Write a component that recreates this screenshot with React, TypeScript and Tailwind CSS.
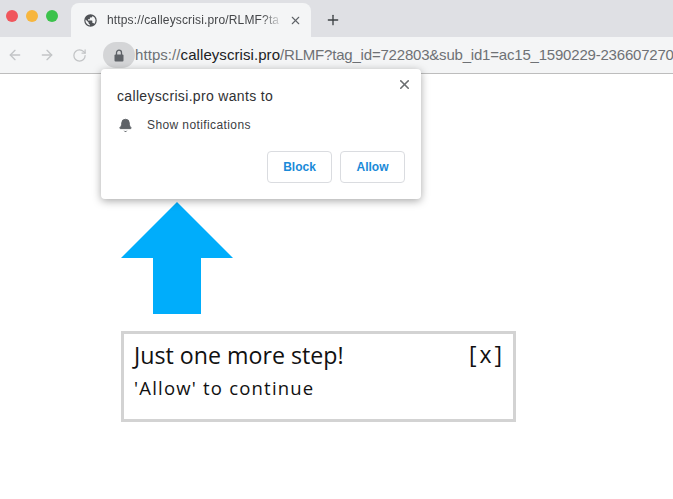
import React from 'react'
import { ArrowLeft, ArrowRight, RotateCw, X, Plus, Bell } from 'lucide-react'

function Globe() {
    return (
        <svg width="15" height="15" viewBox="0 0 24 24" className="shrink-0 fill-[#4f5256]">
            <path d="M12 2a10 10 0 1 0 0 20 10 10 0 0 0 0-20zm-1 17.900A8 8 0 0 1 4.200 10.200L9 15v1c0 1.100.9 2 2 2v1.900zm6.900-2.500A2 2 0 0 0 16 16h-1v-3c0-.6-.4-1-1-1H8v-2h2c.6 0 1-.4 1-1V7h2a2 2 0 0 0 2-2v-.4a8 8 0 0 1 2.900 12.800z" />
        </svg>
    )
}

function LockIcon() {
    return (
        <svg width="10" height="13" viewBox="0 0 10 13" className="block">
            <path d="M2.500 6V3.700a2.500 2.500 0 0 1 5 0V6" fill="none" stroke="#5f6368" strokeWidth="1.300" />
            <rect x="0.500" y="5.500" width="9" height="7" rx="1" fill="#5f6368" />
        </svg>
    )
}

export default function App() {
    return (
        <main className="relative h-[499px] w-[673px] overflow-hidden bg-white font-['Liberation_Sans',sans-serif]">

            {/* tab strip */}
            <div className="flex h-[37px] items-end bg-[#dfe0e4]">
                <div className="flex w-[71px] items-center gap-[8px] self-center pb-[5px] pl-[6px]">
                    <span className="h-[12px] w-[12px] rounded-full bg-[#f0565c]"></span>
                    <span className="h-[12px] w-[12px] rounded-full bg-[#f7b63e]"></span>
                    <span className="h-[12px] w-[12px] rounded-full bg-[#3cc24c]"></span>
                </div>
                <div className="flex h-[34px] w-[240px] items-center rounded-t-[8px] bg-[#f4f5f6] pr-[9px] pl-[12px]">
                    <Globe />
                    <span className="ml-[9px] w-[176px] overflow-hidden text-[12px] tracking-[0.15px] whitespace-nowrap text-[#45474a] [mask-image:linear-gradient(to_right,black_88%,transparent)]">https://calleyscrisi.pro/RLMF?ta</span>
                    <X size={13} strokeWidth={2} className="ml-auto text-[#5f6368]" />
                </div>
                <Plus size={16} strokeWidth={2} className="mb-[9px] ml-[14px] text-[#3c4043]" />
            </div>

            {/* toolbar */}
            <div className="flex h-[37px] items-center border-b border-[#bdbdbd] bg-[#f4f5f6] pl-[7px]">
                <ArrowLeft size={16} strokeWidth={2} className="shrink-0 text-[#c2c4c6]" />
                <ArrowRight size={16} strokeWidth={2} className="ml-[16px] shrink-0 text-[#c2c4c6]" />
                <RotateCw size={15} strokeWidth={2} className="ml-[17px] shrink-0 text-[#c2c4c6]" />
                <div className="ml-[16px] flex h-[26px] w-[32px] shrink-0 items-center justify-center rounded-full bg-[#d4d5d7]">
                    <LockIcon />
                </div>
                <div className="overflow-hidden text-[15px] tracking-[0.07px] whitespace-nowrap text-[#6e7175]">
                    https://<span className="text-[#202124]">calleyscrisi.pro</span><span className="tracking-[-0.2px]">/RLMF?tag_id=722803&amp;sub_id1=ac15_1590229-236607270</span>
                </div>
            </div>

            {/* permission popup */}
            <div className="absolute top-[69px] left-[101px] h-[130px] w-[320px] rounded-[4px] bg-white px-[16px] pt-[18px] shadow-[0_2px_8px_rgba(0,0,0,0.35)]">
                <X size={15} strokeWidth={2.5} className="absolute top-[8px] right-[9px] text-[#6a6d70]" />
                <div className="text-[14px] leading-[18px] tracking-[0.33px] text-[#303134]">calleyscrisi.pro wants to</div>
                <div className="mt-[11px] flex items-center">
                    <Bell size={15} fill="#5f6368" strokeWidth={1.5} className="ml-[1px] text-[#5f6368]" />
                    <span className="ml-[14px] text-[12px] tracking-[0.4px] text-[#3c4043]">Show notifications</span>
                </div>
                <div className="mt-[17px] flex justify-end gap-[8px]">
                    <button className="h-[32px] w-[65px] rounded-[4px] border border-[#dadce0] text-[12px] font-bold text-[#1a8ad8]">Block</button>
                    <button className="h-[32px] w-[65px] rounded-[4px] border border-[#dadce0] text-[12px] font-bold text-[#1a8ad8]">Allow</button>
                </div>
            </div>

            {/* page content */}
            <section className="ml-[121px] pt-[128px]">
                <svg width="112" height="112" viewBox="0 0 112 112" className="block">
                    <polygon points="56,0 112,56 80,56 80,112 32,112 32,56 0,56" fill="#00adfb" />
                </svg>
                <div className="mt-[17px] h-[91px] w-[395px] border-[3px] border-[#d3d3d3] pt-[5px] pr-[8px] pl-[10px] font-['Open_Sans',sans-serif] text-[#111]">
                    <div className="flex items-start justify-between">
                        <span className="text-[23.2px] leading-[32px]">Just one more step!</span>
                        <span className="pt-[1px] text-[23px] leading-[28px] tracking-[3px]">[x]</span>
                    </div>
                    <div className="mt-[5px] text-[18.5px] leading-[24px] tracking-[1.2px]">'Allow' to continue</div>
                </div>
            </section>

        </main>
    )
}
